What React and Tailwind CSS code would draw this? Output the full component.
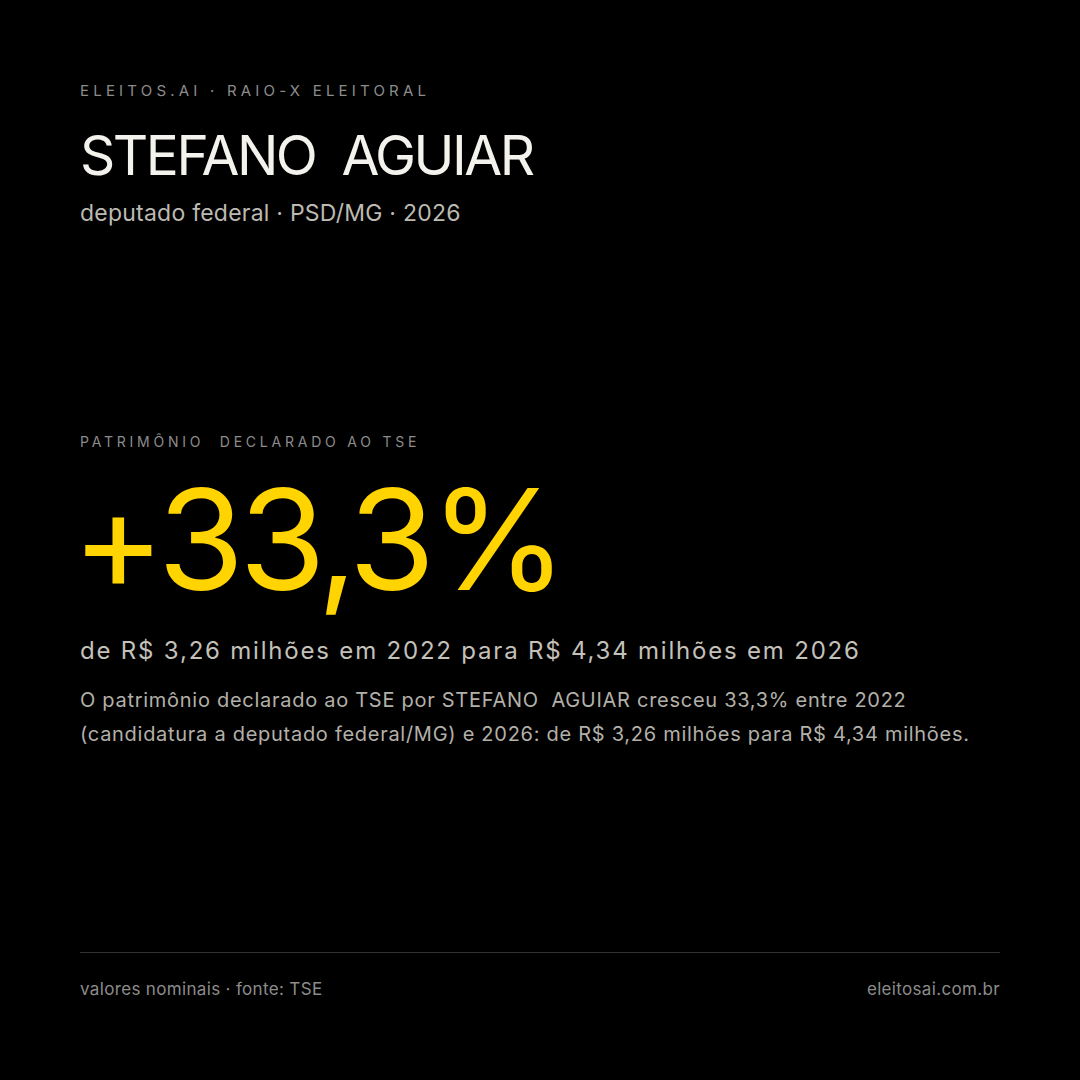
import React from 'react';

const font = { fontFamily: 'Inter, "Liberation Sans", sans-serif' };

const App = () => {
  return (
    <div style={font} className="w-[1080px] h-[1080px] bg-black flex flex-col px-20 overflow-hidden">
      <div className="pt-[82px]">
        <p className="text-[15px] leading-[18px] tracking-[0.28em] text-[#8c8c8c]">ELEITOS.AI · RAIO-X ELEITORAL</p>
        <h1 className="mt-[25px] text-[55px] leading-[60px] font-normal tracking-[-0.045em] text-[#f4f2ed]">STEFANO&nbsp; AGUIAR</h1>
        <p className="mt-[14px] text-[23px] leading-[28px] tracking-[0.01em] text-[#bdbab3]">deputado federal · PSD/MG · 2026</p>
      </div>

      <div className="mt-[206px]">
        <p className="text-[14px] leading-[18px] tracking-[0.27em] text-[#8c8c8c]">PATRIMÔNIO&nbsp; DECLARADO AO TSE</p>
        <p className="mt-[18px] -ml-[8px] text-[140px] leading-[140px] font-normal tracking-[-0.037em] text-[#ffd400]">+33,3%</p>
        <p className="mt-[26px] text-[24px] leading-[32px] tracking-[0.075em] text-[#c4c1ba]">de R$ 3,26 milhões em 2022 para R$ 4,34 milhões em 2026</p>
        <p className="mt-[16px] text-[20px] leading-[34px] tracking-[0.036em] text-[#b3b0a9] max-w-[910px]">
          O patrimônio declarado ao TSE por STEFANO&nbsp; AGUIAR cresceu 33,3% entre 2022 (candidatura a deputado federal/MG) e 2026: de R$ 3,26 milhões para R$ 4,34 milhões.
        </p>
      </div>

      <div className="mt-auto mb-[81px]">
        <div className="h-px bg-[#333333]" />
        <div className="mt-[26px] flex justify-between text-[17px] leading-[20px] tracking-[0.02em] text-[#8c8c8c]">
          <span>valores nominais · fonte: TSE</span>
          <span>eleitosai.com.br</span>
        </div>
      </div>
    </div>
  );
};

export default App;
